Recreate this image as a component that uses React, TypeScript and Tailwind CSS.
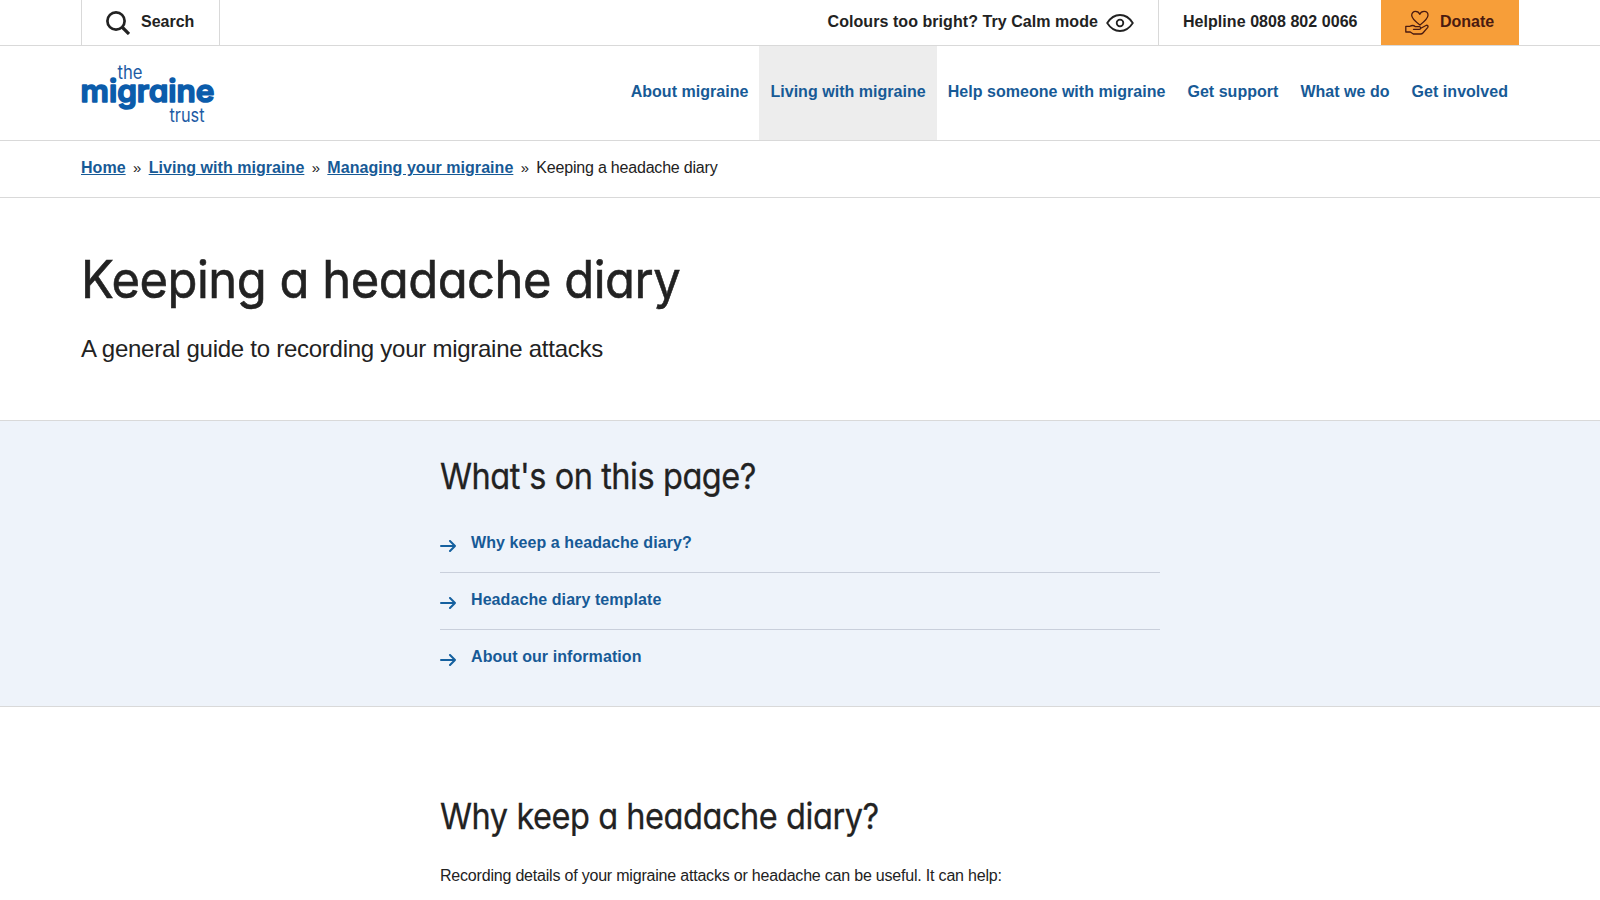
import React from 'react';

const navItems = [
  { label: "About migraine", active: false },
  { label: "Living with migraine", active: true },
  { label: "Help someone with migraine", active: false },
  { label: "Get support", active: false },
  { label: "What we do", active: false },
  { label: "Get involved", active: false }
];

const breadcrumbs = ["Home", "Living with migraine", "Managing your migraine"];

const pageLinks = [
  "Why keep a headache diary?",
  "Headache diary template",
  "About our information"
];

const Logo = () => (
  <svg width="134" height="60" viewBox="0 0 134 60" className="block overflow-visible font-['Inter',sans-serif] [font-feature-settings:'cv11']">
    <text x="36.500" y="15.500" fontSize="18.500" fill="#1d5ba4" textLength="25" lengthAdjust="spacingAndGlyphs">the</text>
    <text x="-0.500" y="38.700" fontSize="31.500" fontWeight="600" fill="#0b5cab" stroke="#0b5cab" strokeWidth="1.600" strokeLinejoin="round" textLength="134" lengthAdjust="spacingAndGlyphs">migraine</text>
    <text x="88.500" y="58.500" fontSize="18.500" fill="#1d5ba4" textLength="35" lengthAdjust="spacingAndGlyphs">trust</text>
  </svg>
);

const SearchIcon = () => (
  <svg width="24" height="24" viewBox="0 0 24 24" fill="none" stroke="#222" strokeWidth="2.700">
    <circle cx="10" cy="10" r="8.600" />
    <path d="M16 16l7 7" strokeWidth="3.200" />
  </svg>
);

const EyeIcon = () => (
  <svg width="28" height="18" viewBox="0 0 28 18" fill="none" stroke="#222" strokeWidth="1.800">
    <path d="M1.200 9C4.500 3.800 9 1 14 1s9.500 2.800 12.800 8C23.500 14.200 19 17 14 17S4.500 14.200 1.200 9z" />
    <circle cx="14" cy="9" r="3.300" />
  </svg>
);

const DonateIcon = () => (
  <svg width="24" height="25" viewBox="0 0 24 25" fill="none" stroke="#4a1a10" strokeWidth="1.300" strokeLinecap="round" strokeLinejoin="round">
    <path d="M15 15C11 12 6.700 8.800 6.700 5.200 6.700 2.900 8.400 1.400 10.400 1.400c2 0 3.700 1 4.400 3 .7-2 2.400-3 4.300-3 2.200 0 3.900 1.600 3.900 3.900 0 3.500-4 6.600-8 9.700z" />
    <path d="M8.500 19.300h5.800c1.800 0 1.900-2.600 0-2.600h-3.800c-1.500-1.200-3.700-1.500-5.500-.4H.8v5.700h4.500l3 2h7.200c1 0 1.800-.3 2.400-1l4.700-5.400c1.100-1.400-.2-2.900-1.700-2.100l-5 2.700" />
  </svg>
);

const ArrowIcon = () => (
  <svg width="16" height="12" viewBox="0 0 16 12" fill="none" stroke="#15609f" strokeWidth="2" strokeLinecap="round" strokeLinejoin="round">
    <path d="M1 6h14M10 1l5 5-5 5" />
  </svg>
);

export default function App() {
  return (
    <div className="h-[900px] w-full overflow-hidden bg-white font-['Liberation_Sans',Arial,sans-serif] text-base text-[#222]">
      {/* Top bar */}
      <div className="flex h-[46px] justify-between border-b border-[#d9d9d9] px-[81px] font-bold">
        <button className="flex w-[139px] items-center gap-[11px] border-x border-[#d9d9d9] pl-6">
          <SearchIcon />
          <span className="-mt-0.5">Search</span>
        </button>
        <div className="flex">
          <a className="flex items-center gap-2 pr-6">
            <span className="-mt-0.5 tracking-[0.06px]">Colours too bright? Try Calm mode</span>
            <EyeIcon />
          </a>
          <a className="flex w-[223px] items-center border-l border-[#d9d9d9] pl-6">
            <span className="-mt-0.5 tracking-[0.05px]">Helpline 0808 802 0066</span>
          </a>
          <a className="flex w-[138px] items-center gap-[11px] bg-[#f79e39] pl-6 text-[#4a1a10]">
            <DonateIcon />
            <span className="-mt-0.5">Donate</span>
          </a>
        </div>
      </div>

      {/* Header */}
      <header className="flex h-[95px] items-center justify-between border-b border-[#d9d9d9] px-[81px]">
        <Logo />
        <nav className="flex h-full">
          {navItems.map((item) => (
            <a
              key={item.label}
              className={`flex items-center px-[11px] pb-0.5 font-bold tracking-[0.03px] text-[#175a96] ${item.active ? 'bg-[#ededed]' : ''}`}
            >
              {item.label}
            </a>
          ))}
        </nav>
      </header>

      {/* Breadcrumb */}
      <div className="flex h-[57px] items-center border-b border-[#d9d9d9] px-[81px] pb-0.5">
        {breadcrumbs.map((crumb) => (
          <React.Fragment key={crumb}>
            <a className="font-bold tracking-[0.05px] text-[#175a96] underline">{crumb}</a>
            <span className="w-[23px] text-center text-[15px]">»</span>
          </React.Fragment>
        ))}
        <span className="tracking-[-0.2px]">Keeping a headache diary</span>
      </div>

      {/* Title */}
      <section className="h-[223px] border-b border-[#d9d9d9] px-[81px] pt-[51px]">
        <h1 className="origin-left scale-x-[0.94] font-['Inter',sans-serif] text-[52px] leading-[62px] tracking-[-0.5px] [font-feature-settings:'cv11'] [-webkit-text-stroke:0.6px_#222]">
          Keeping a headache diary
        </h1>
        <p className="mt-[22px] text-2xl leading-8 tracking-[-0.26px]">A general guide to recording your migraine attacks</p>
      </section>

      {/* Page contents */}
      <section className="h-[286px] border-b border-[#d9d9d9] bg-[#eef3fa]">
        <div className="mx-auto w-[720px] pt-8">
          <h2 className="origin-left scale-x-[0.903] font-['Inter',sans-serif] text-[36px] leading-[46px] tracking-[-0.5px] [font-feature-settings:'cv11'] [-webkit-text-stroke:0.3px_#222]">
            What's on this page?
          </h2>
          <ul className="mt-[17px]">
            {pageLinks.map((link) => (
              <li key={link} className="flex h-[57px] items-center gap-[15px] border-b border-[#c9cfdb] pb-0.5 font-bold tracking-[0.08px] text-[#175a96] last:border-transparent">
                <span className="mt-1.5"><ArrowIcon /></span>
                {link}
              </li>
            ))}
          </ul>
        </div>
      </section>

      <section className="mx-auto w-[720px] pt-[86px]">
        <h2 className="origin-left scale-x-[0.903] font-['Inter',sans-serif] text-[36px] leading-[46px] tracking-[-0.5px] [font-feature-settings:'cv11'] [-webkit-text-stroke:0.3px_#222]">
          Why keep a headache diary?
        </h2>
        <p className="mt-[25px] leading-6 tracking-[-0.2px]">
          Recording details of your migraine attacks or headache can be useful. It can help:
        </p>
      </section>
    </div>
  );
}
